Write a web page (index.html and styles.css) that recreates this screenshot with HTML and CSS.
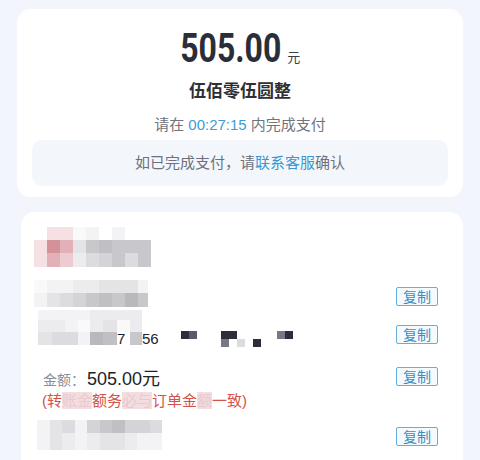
FILE: index.html
```html
<!DOCTYPE html>
<html>
<head>
	<meta charset="utf-8">
	<link rel="stylesheet" href="styles.css">
</head>
<body>
<div class="page">
	<div class="card summary">
		<div class="amount"><span class="num">505.00</span><span class="unit">元</span></div>
		<div class="capital">伍佰零伍圆整</div>
		<div class="timer">请在 <span class="time">00:27:15</span> 内完成支付</div>
		<div class="notice">如已完成支付，请<span class="link">联系客服</span>确认</div>
	</div>

	<div class="card details">
		<div class="row bank">
			<div class="mosaic m-bank">
				<i></i><i class="p1"></i><i class="p1"></i><i class="g0"></i><i class="g1"></i><i></i><i class="g1"></i><i></i><i></i>
				<i class="p1"></i><i class="p4"></i><i class="p3"></i><i class="g3"></i><i class="g6"></i><i class="g7"></i><i class="g6"></i><i class="g6"></i><i class="g6"></i>
				<i class="p1"></i><i class="p3"></i><i class="p2"></i><i class="g2"></i><i class="g4"></i><i class="g5"></i><i class="g6"></i><i class="g4"></i><i class="g6"></i>
			</div>
		</div>

		<div class="row name">
			<div class="mosaic m-name">
				<i class="g0"></i><i class="g1"></i><i class="g1"></i><i class="g2"></i><i class="g2"></i><i class="g3"></i><i class="g3"></i><i class="g3"></i><i class="g1"></i>
				<i class="g1"></i><i class="g3"></i><i class="g4"></i><i class="g5"></i><i class="g6"></i><i class="g7"></i><i class="g6"></i><i class="g8"></i><i class="g6"></i>
			</div>
			<span class="copy">复制</span>
		</div>

		<div class="row account">
			<div class="acct">
				<div class="mosaic m-acct">
					<i class="g1"></i><i class="g1"></i><i class="g1"></i><i class="g1"></i><i class="g2"></i><i class="g2"></i><i class="g2"></i><i class="g2"></i><i></i>
					<i class="g2"></i><i class="g2"></i><i class="g1"></i><i class="g0"></i><i class="g2"></i><i class="g3"></i><i class="g0"></i><i class="g2"></i><i></i>
					<i class="g3"></i><i class="g4"></i><i class="g4"></i><i class="g1"></i><i class="g8"></i><i class="g7"></i><span class="digits">7</span><i class="g6"></i><span class="digits">56</span>
				</div>
				<div class="specks">
					<i class="d1"></i><i class="d2"></i><i></i><i></i><i></i><i class="d1"></i><i class="d1"></i><i></i><i></i><i></i><i></i><i></i><i class="d3"></i><i class="d1"></i>
					<i></i><i></i><i></i><i></i><i></i><i class="d3"></i><i></i><i class="g4"></i><i></i><i class="d1"></i><i></i><i></i><i></i><i></i>
				</div>
			</div>
			<span class="copy">复制</span>
		</div>

		<div class="row amount-row">
			<div><span class="label">金额：</span><span class="value">505.00元</span></div>
			<span class="copy">复制</span>
		</div>
		<p class="warn">(转<span class="blot">账金</span>额务<span class="blot">必与</span>订单金<span class="blot">额</span>一致)</p>

		<div class="row remark">
			<div class="mosaic m-remark">
				<i class="g1"></i><i class="g3"></i><i class="g4"></i><i class="g1"></i><i class="g5"></i><i class="g6"></i><i class="g7"></i><i class="g5"></i><i class="g5"></i><i class="g4"></i>
				<i class="g1"></i><i class="g3"></i><i class="g2"></i><i class="g1"></i><i class="g2"></i><i class="g3"></i><i class="g3"></i><i class="g2"></i><i class="g1"></i><i class="g1"></i>
			</div>
			<span class="copy">复制</span>
		</div>
	</div>
</div>
</body>
</html>
```

FILE: styles.css
```css
	body{
		margin: 0;
		background-color: #f2f6fc;
		font-family: "Liberation Sans", "Noto Sans CJK SC", sans-serif;
		color: #2f3036;
	}

	.page{
		width: 446px;
		padding: 9px 17px 0 17px;
	}

	.card{
		background-color: white;
		border-radius: 14px;
	}

	/* top card */
	.summary{
		padding: 17px 0 11px 0;
		text-align: center;
	}
	.amount{
		height: 44px;
		line-height: 44px;
		font-size: 13px;
		font-family: "Noto Sans CJK SC", sans-serif;
		color: #3a3d46;
	}
	.num{
		display: inline-block;
		font-family: Roboto, sans-serif;
		font-weight: 700;
		font-size: 41px;
		color: #2b2e38;
		transform: scaleX(0.78);
		margin: 0 -14px;
	}
	.unit{
		margin-left: 6px;
	}
	.capital{
		height: 40px;
		line-height: 40px;
		font-family: "Noto Sans CJK SC", sans-serif;
		font-size: 17px;
		font-weight: 700;
		color: #2f3036;
	}
	.timer{
		height: 30px;
		line-height: 30px;
		font-size: 15px;
		color: #71747e;
	}
	.time{
		color: #3f9bd6;
	}
	.notice{
		height: 46px;
		line-height: 46px;
		margin: 0 15px;
		border-radius: 10px;
		background-color: #f3f7fc;
		font-size: 15px;
		color: #6e717b;
	}
	.link{
		color: #3a96d0;
	}

	/* bottom card */
	.details{
		margin: 15px 0 0 4px;
		padding: 15px 25px 20px 13px;
		border-radius: 14px 14px 0 0;
	}
	.row{
		display: flex;
		justify-content: space-between;
		align-items: flex-end;
	}
	.bank{
		height: 40px;
	}
	.name{
		margin-top: 13px;
		height: 27px;
	}
	.account{
		margin-top: 3px;
		height: 35px;
	}
	.amount-row{
		margin-top: 22px;
		height: 19px;
		align-items: center;
	}
	.remark{
		margin-top: 7px;
		height: 30px;
	}
	.name .copy, .account .copy{
		margin-bottom: 1px;
	}
	.remark .copy{
		margin-bottom: 4px;
	}

	.copy{
		display: inline-block;
		box-sizing: border-box;
		height: 19px;
		padding: 0 6px;
		border: 1px solid #66aedb;
		border-radius: 2px;
		background-color: #f5fafd;
		font-family: "Noto Sans CJK SC", sans-serif;
		font-size: 14px;
		line-height: 17px;
		color: #3b8dc6;
	}

	.label{
		font-size: 14px;
		color: #8a8d96;
		margin-left: 9px;
	}
	.value{
		margin-left: 2px;
		font-size: 18px;
		color: #222328;
	}
	.warn{
		margin: 3px 0 0 8px;
		height: 24px;
		line-height: 24px;
		font-size: 15px;
		color: #d5524a;
	}
	.blot{
		background-color: #f3dde0;
		color: #ebc8cd;
	}

	/* pixelated fields */
	.mosaic{
		display: grid;
	}
	.mosaic i, .specks i{
		display: block;
	}
	.m-bank{
		grid-template-columns: repeat(9, 13px);
		grid-template-rows: 13px 13px 14px;
	}
	.m-name{
		grid-template-columns: repeat(8, 13px) 10px;
		grid-template-rows: 13px 14px;
	}
	.acct{
		display: flex;
		align-items: flex-start;
		height: 35px;
	}
	.m-acct{
		margin-left: 4px;
		grid-template-columns: 14px 13px 13px 12px 13px 14px 13px 12px 19px;
		grid-template-rows: 10px 12px 13px;
	}
	.digits{
		font-size: 15px;
		line-height: 13px;
		color: #222328;
	}
	.specks{
		display: grid;
		grid-template-columns: repeat(14, 8px);
		grid-template-rows: 8px 8px;
		margin: 21px 0 0 20px;
	}
	.m-remark{
		margin-left: 3px;
		grid-template-columns: repeat(10, 12.5px);
		grid-template-rows: 13px 17px;
	}

	.g0{ background-color: #f9f9fa; }
	.g1{ background-color: #f3f3f5; }
	.g2{ background-color: #ececee; }
	.g3{ background-color: #e4e4e7; }
	.g4{ background-color: #dcdce0; }
	.g5{ background-color: #d4d4d8; }
	.g6{ background-color: #c8c8cc; }
	.g7{ background-color: #c0c0c4; }
	.g8{ background-color: #b9b9bd; }
	.p1{ background-color: #f5e1e4; }
	.p2{ background-color: #ecccd1; }
	.p3{ background-color: #e2b0b7; }
	.p4{ background-color: #d5919a; }
	.d1{ background-color: #2d2e3a; }
	.d2{ background-color: #5a5b68; }
	.d3{ background-color: #777886; }
```
